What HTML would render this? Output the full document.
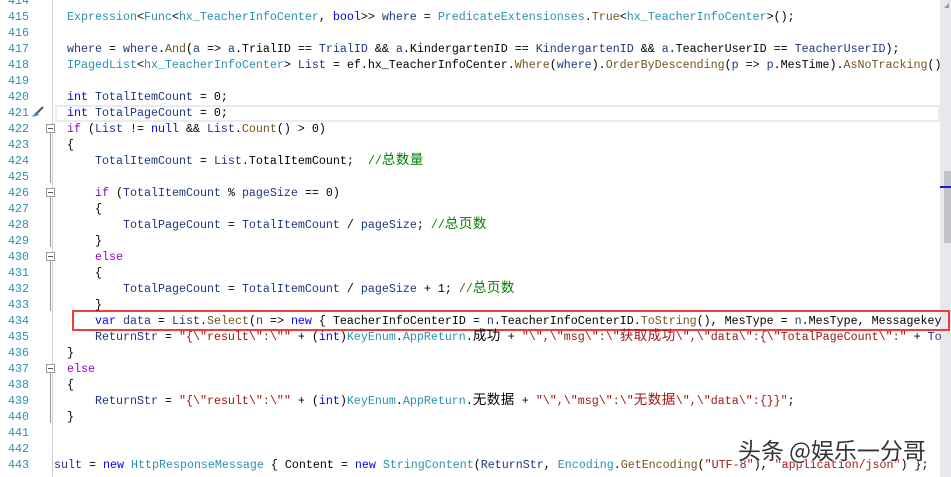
<!DOCTYPE html>
<html><head><meta charset="utf-8"><style>
body{margin:0;width:951px;height:477px;overflow:hidden;background:#fff;position:relative;font-family:"Liberation Mono","Noto Sans CJK SC",monospace;font-size:11.67px;}
.ln{position:absolute;left:0;width:29px;text-align:right;color:#2b91af;height:16px;line-height:16px;margin-top:1px}
.c{position:absolute;white-space:pre;height:16px;line-height:16px;color:#000;margin-top:1px}
.t{color:#2b91af}.k{color:#0000ff}.p{color:#8f08c4}.m{color:#74531f}.s{color:#a31515}.v{color:#1f377f}.g{color:#008000}
.z{font-size:13.5px;letter-spacing:0.5px}
.fold{position:absolute;left:46px;width:7px;height:7px;border:1px solid #999;background:#fff}
.fold:after{content:"";position:absolute;left:1px;top:3px;width:5px;height:1px;background:#555}
</style></head><body>
<div style="position:absolute;left:52px;top:0;width:1px;height:477px;background:#d0d0d0"></div>
<div style="position:absolute;left:55px;top:105px;width:881px;height:13px;border:2px solid #eaeaf2"></div>
<div style="position:absolute;left:940px;top:0;width:11px;height:477px;background:#e8e8ec"></div>
<div style="position:absolute;left:944px;top:171px;width:7px;height:72px;background:#c2c3c9"></div>
<div style="position:absolute;left:940px;top:186px;width:11px;height:2px;background:#1c1cc8"></div>
<div style="position:absolute;left:944px;top:3px;width:0;height:0;border-left:5px solid transparent;border-bottom:5px solid #999"></div>
<div style="position:absolute;left:72px;top:310px;width:874px;height:17px;border:2px solid #f03c3c"></div>
<svg style="position:absolute;left:30px;top:105px" width="16" height="14"><path d="M2 12 L6 7 L9 10 Z" fill="#3a7bd5"/><path d="M7 8 L13 2" stroke="#555" stroke-width="2"/></svg>
<div class="fold" style="top:124px"></div>
<div class="fold" style="top:188px"></div>
<div class="fold" style="top:252px"></div>
<div class="fold" style="top:364px"></div>
<div style="position:absolute;left:50px;top:133px;width:1px;height:50px;background:#999"></div>
<div style="position:absolute;left:50px;top:197px;width:1px;height:50px;background:#999"></div>
<div style="position:absolute;left:50px;top:261px;width:1px;height:50px;background:#999"></div>
<div style="position:absolute;left:50px;top:373px;width:1px;height:50px;background:#999"></div>

<div class="ln" style="top:-8px">414</div>
<div class="ln" style="top:8px">415</div><div class="c" style="left:67px;top:8px"><span class="t">Expression</span>&lt;<span class="t">Func</span>&lt;<span class="t">hx_TeacherInfoCenter</span>, <span class="k">bool</span>&gt;&gt; <span class="v">where</span> = <span class="t">PredicateExtensionses</span>.<span class="m">True</span>&lt;<span class="t">hx_TeacherInfoCenter</span>&gt;();</div>
<div class="ln" style="top:24px">416</div>
<div class="ln" style="top:40px">417</div><div class="c" style="left:67px;top:40px"><span class="v">where</span> = <span class="v">where</span>.<span class="m">And</span>(<span class="v">a</span> =&gt; <span class="v">a</span>.TrialID == <span class="v">TrialID</span> &amp;&amp; <span class="v">a</span>.KindergartenID == <span class="v">KindergartenID</span> &amp;&amp; <span class="v">a</span>.TeacherUserID == <span class="v">TeacherUserID</span>);</div>
<div class="ln" style="top:56px">418</div><div class="c" style="left:67px;top:56px"><span class="t">IPagedList</span>&lt;<span class="t">hx_TeacherInfoCenter</span>&gt; <span class="v">List</span> = ef.hx_TeacherInfoCenter.<span class="m">Where</span>(<span class="v">where</span>).<span class="m">OrderByDescending</span>(<span class="v">p</span> =&gt; <span class="v">p</span>.MesTime).<span class="m">AsNoTracking</span>()</div>
<div class="ln" style="top:72px">419</div>
<div class="ln" style="top:88px">420</div><div class="c" style="left:67px;top:88px"><span class="k">int</span> <span class="v">TotalItemCount</span> = 0;</div>
<div class="ln" style="top:104px">421</div><div class="c" style="left:67px;top:104px"><span class="k">int</span> <span class="v">TotalPageCount</span> = 0;</div>
<div class="ln" style="top:120px">422</div><div class="c" style="left:67px;top:120px"><span class="p">if</span> (<span class="v">List</span> != <span class="k">null</span> &amp;&amp; <span class="v">List</span>.<span class="m">Count</span>() &gt; 0)</div>
<div class="ln" style="top:136px">423</div><div class="c" style="left:67px;top:136px">{</div>
<div class="ln" style="top:152px">424</div><div class="c" style="left:95px;top:152px"><span class="v">TotalItemCount</span> = <span class="v">List</span>.TotalItemCount;  <span class="g">//<span class="z">总数量</span></span></div>
<div class="ln" style="top:168px">425</div>
<div class="ln" style="top:184px">426</div><div class="c" style="left:95px;top:184px"><span class="p">if</span> (<span class="v">TotalItemCount</span> % <span class="v">pageSize</span> == 0)</div>
<div class="ln" style="top:200px">427</div><div class="c" style="left:95px;top:200px">{</div>
<div class="ln" style="top:216px">428</div><div class="c" style="left:123px;top:216px"><span class="v">TotalPageCount</span> = <span class="v">TotalItemCount</span> / <span class="v">pageSize</span>; <span class="g">//<span class="z">总页数</span></span></div>
<div class="ln" style="top:232px">429</div><div class="c" style="left:95px;top:232px">}</div>
<div class="ln" style="top:248px">430</div><div class="c" style="left:95px;top:248px"><span class="p">else</span></div>
<div class="ln" style="top:264px">431</div><div class="c" style="left:95px;top:264px">{</div>
<div class="ln" style="top:280px">432</div><div class="c" style="left:123px;top:280px"><span class="v">TotalPageCount</span> = <span class="v">TotalItemCount</span> / <span class="v">pageSize</span> + 1; <span class="g">//<span class="z">总页数</span></span></div>
<div class="ln" style="top:296px">433</div><div class="c" style="left:95px;top:296px">}</div>
<div class="ln" style="top:312px">434</div><div class="c" style="left:95px;top:312px"><span class="k">var</span> <span class="v">data</span> = <span class="v">List</span>.<span class="m">Select</span>(<span class="v">n</span> =&gt; <span class="k">new</span> { TeacherInfoCenterID = <span class="v">n</span>.TeacherInfoCenterID.<span class="m">ToString</span>(), MesType = <span class="v">n</span>.MesType, Messagekey</div>
<div class="ln" style="top:328px">435</div><div class="c" style="left:95px;top:328px"><span class="v">ReturnStr</span> = <span class="s">"{\"result\":\""</span> + (<span class="k">int</span>)<span class="t">KeyEnum</span>.<span class="t">AppReturn</span>.<span class="z">成功</span> + <span class="s">"\",\"msg\":\"<span class="z">获取成功</span>\",\"data\":{\"TotalPageCount\":"</span> + <span class="v">To</span></div>
<div class="ln" style="top:344px">436</div><div class="c" style="left:67px;top:344px">}</div>
<div class="ln" style="top:360px">437</div><div class="c" style="left:67px;top:360px"><span class="p">else</span></div>
<div class="ln" style="top:376px">438</div><div class="c" style="left:67px;top:376px">{</div>
<div class="ln" style="top:392px">439</div><div class="c" style="left:95px;top:392px"><span class="v">ReturnStr</span> = <span class="s">"{\"result\":\""</span> + (<span class="k">int</span>)<span class="t">KeyEnum</span>.<span class="t">AppReturn</span>.<span class="z">无数据</span> + <span class="s">"\",\"msg\":\"<span class="z">无数据</span>\",\"data\":{}}"</span>;</div>
<div class="ln" style="top:408px">440</div><div class="c" style="left:67px;top:408px">}</div>
<div class="ln" style="top:424px">441</div>
<div class="ln" style="top:440px">442</div>
<div class="ln" style="top:456px">443</div><div class="c" style="left:54px;top:456px"><span class="v">sult</span> = <span class="k">new</span> <span class="t">HttpResponseMessage</span> { Content = <span class="k">new</span> <span class="t">StringContent</span>(<span class="v">ReturnStr</span>, <span class="t">Encoding</span>.<span class="m">GetEncoding</span>(<span class="s">"UTF-8"</span>), <span class="s">"application/json"</span>) };</div>
<div style="position:absolute;left:738px;top:432px;font-family:'Noto Sans CJK SC',sans-serif;font-size:23px;color:#333;text-shadow:0 0 2px #fff,0 0 2px #fff">头条 @娱乐一分哥</div>
</body></html>
